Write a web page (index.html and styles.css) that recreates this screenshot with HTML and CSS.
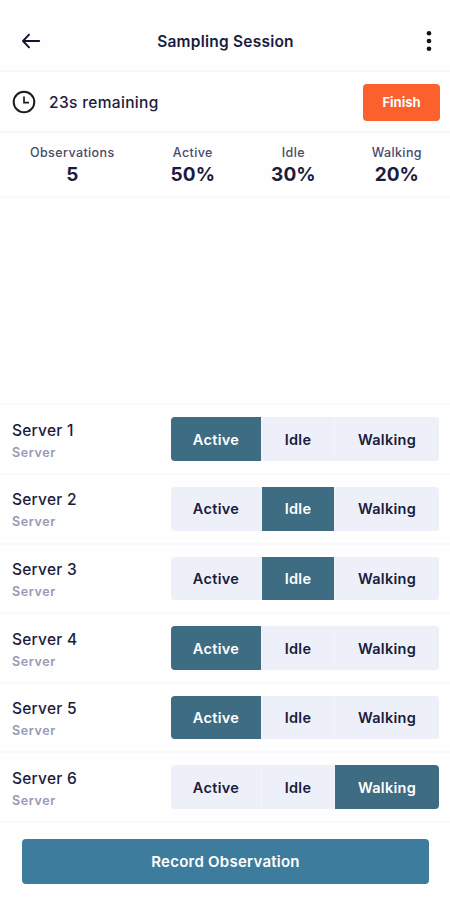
FILE: index.html
```html
<!DOCTYPE html>
<html lang="en">
<head>
    <meta charset="UTF-8">
    <meta name="viewport" content="width=device-width, initial-scale=1.0">
    <title>Sampling Session</title>
    <link rel="stylesheet" href="styles.css">
</head>
<body>
    <header class="header">
        <button class="icon-btn" aria-label="Back">
            <svg width="20" height="18" viewBox="0 0 20 18" fill="none" stroke="#15152f" stroke-width="1.9" stroke-linecap="round" stroke-linejoin="round">
                <path d="M18.2 9H2.4M8 2.6L2 9l6 6.4"/>
            </svg>
        </button>
        <h1 class="title">Sampling Session</h1>
        <button class="icon-btn" aria-label="Menu">
            <svg width="6" height="22" viewBox="0 0 6 22" fill="#111">
                <circle cx="3" cy="3.2" r="2.3"/>
                <circle cx="3" cy="11" r="2.3"/>
                <circle cx="3" cy="18.8" r="2.3"/>
            </svg>
        </button>
    </header>

    <div class="timer">
        <svg width="24" height="24" viewBox="0 0 24 24" fill="none" stroke="#1b1b24" stroke-width="2">
            <circle cx="12" cy="12" r="10.3"/>
            <path d="M12 6.6v6h5" stroke-width="1.7"/>
        </svg>
        <span class="time-left">23s remaining</span>
        <button class="finish-btn">Finish</button>
    </div>

    <div class="stats">
        <div class="stat"><span class="stat-label">Observations</span><span class="stat-value">5</span></div>
        <div class="stat"><span class="stat-label">Active</span><span class="stat-value">50%</span></div>
        <div class="stat"><span class="stat-label">Idle</span><span class="stat-value">30%</span></div>
        <div class="stat"><span class="stat-label">Walking</span><span class="stat-value">20%</span></div>
    </div>

    <div class="servers">
        <div class="server">
            <div class="info"><div class="name">Server 1</div><div class="role">Server</div></div>
            <div class="choices"><button class="selected">Active</button><button>Idle</button><button>Walking</button></div>
        </div>
        <div class="server">
            <div class="info"><div class="name">Server 2</div><div class="role">Server</div></div>
            <div class="choices"><button>Active</button><button class="selected">Idle</button><button>Walking</button></div>
        </div>
        <div class="server">
            <div class="info"><div class="name">Server 3</div><div class="role">Server</div></div>
            <div class="choices"><button>Active</button><button class="selected">Idle</button><button>Walking</button></div>
        </div>
        <div class="server">
            <div class="info"><div class="name">Server 4</div><div class="role">Server</div></div>
            <div class="choices"><button class="selected">Active</button><button>Idle</button><button>Walking</button></div>
        </div>
        <div class="server">
            <div class="info"><div class="name">Server 5</div><div class="role">Server</div></div>
            <div class="choices"><button class="selected">Active</button><button>Idle</button><button>Walking</button></div>
        </div>
        <div class="server">
            <div class="info"><div class="name">Server 6</div><div class="role">Server</div></div>
            <div class="choices"><button>Active</button><button>Idle</button><button class="selected">Walking</button></div>
        </div>
    </div>

    <footer class="footer">
        <button class="record-btn">Record Observation</button>
    </footer>

    <script>
        // tapping a state moves the highlight inside its own row
        document.querySelectorAll('.choices').forEach(group => {
            group.addEventListener('click', e => {
                if (e.target.tagName !== 'BUTTON') return;
                group.querySelector('.selected').classList.remove('selected');
                e.target.classList.add('selected');
            });
        });
    </script>
</body>
</html>
```
FILE: styles.css
```css
* {
    box-sizing: border-box;
}
body {
    margin: 0;
    height: 900px;
    display: flex;
    flex-direction: column;
    background-color: #fefefe;
    color: #1c1b3d;
    font-family: Inter, "Liberation Sans", sans-serif;
    overflow: hidden;
}
button {
    padding: 0;
    border: none;
    background: none;
    color: inherit;
    font-family: inherit;
    cursor: pointer;
}
.header {
    height: 72px;
    padding: 12px 18px 0 21px;
    display: grid;
    grid-template-columns: 40px 1fr 40px;
    align-items: center;
    border-bottom: 2px solid #f7f7f8;
}
.icon-btn {
    display: flex;
}
.icon-btn:last-child {
    justify-content: flex-end;
}
.title {
    margin: 0 2px 0 0;
    text-align: center;
    font-size: 15.5px;
    font-weight: 600;
    letter-spacing: 0.22px;
}
.timer {
    height: 61px;
    padding: 1px 10px 0 12px;
    display: flex;
    align-items: center;
    border-bottom: 2px solid #f7f8f9;
}
.time-left {
    margin-left: 13px;
    font-size: 15.5px;
    font-weight: 500;
    letter-spacing: 0.35px;
}
.finish-btn {
    margin-left: auto;
    width: 77px;
    height: 37px;
    border-radius: 4px;
    background-color: #fb602d;
    color: #fff;
    font-size: 13px;
    font-weight: 700;
}
.stats {
    height: 65px;
    padding: 12px 0 0 2px;
    display: flex;
    justify-content: space-around;
    border-bottom: 2px solid #f8f9fa;
}
.stat {
    display: flex;
    flex-direction: column;
    align-items: center;
}
.stat-label {
    font-size: 12.5px;
    line-height: 16px;
    font-weight: 500;
    letter-spacing: 0.4px;
    color: #4a4a68;
}
.stat-value {
    font-size: 19px;
    line-height: 27px;
    font-weight: 700;
    letter-spacing: 0.1px;
}
.servers {
    margin-top: auto;
    border-top: 2px solid #f8f9fa;
}
.server {
    height: 69.6px;
    padding: 0 11px 0 12px;
    display: flex;
    align-items: center;
    justify-content: space-between;
    border-bottom: 2px solid #f8f9fa;
}
.info {
    padding-top: 5px;
}
.name {
    font-size: 15.5px;
    line-height: 22px;
    font-weight: 500;
    letter-spacing: 0.25px;
}
.role {
    font-size: 12.5px;
    line-height: 22px;
    font-weight: 600;
    letter-spacing: 0.6px;
    color: #9899b5;
}
.choices {
    width: 268px;
    height: 43.5px;
    display: grid;
    grid-template-columns: 90px 72px 104px;
    gap: 1px;
    border-radius: 4px;
    overflow: hidden;
    background-color: #f2f4fa;
}
.choices button {
    background-color: #edf0f8;
    font-size: 14.5px;
    font-weight: 600;
    letter-spacing: 0.3px;
}
.choices .selected {
    background-color: #3e6c83;
    color: #fff;
}
.footer {
    height: 77px;
    padding: 16px 21px 0 22px;
}
.record-btn {
    width: 100%;
    height: 45px;
    border-radius: 4px;
    background-color: #3e7c9d;
    color: #fff;
    font-size: 15px;
    font-weight: 600;
    letter-spacing: 0.25px;
}
```
